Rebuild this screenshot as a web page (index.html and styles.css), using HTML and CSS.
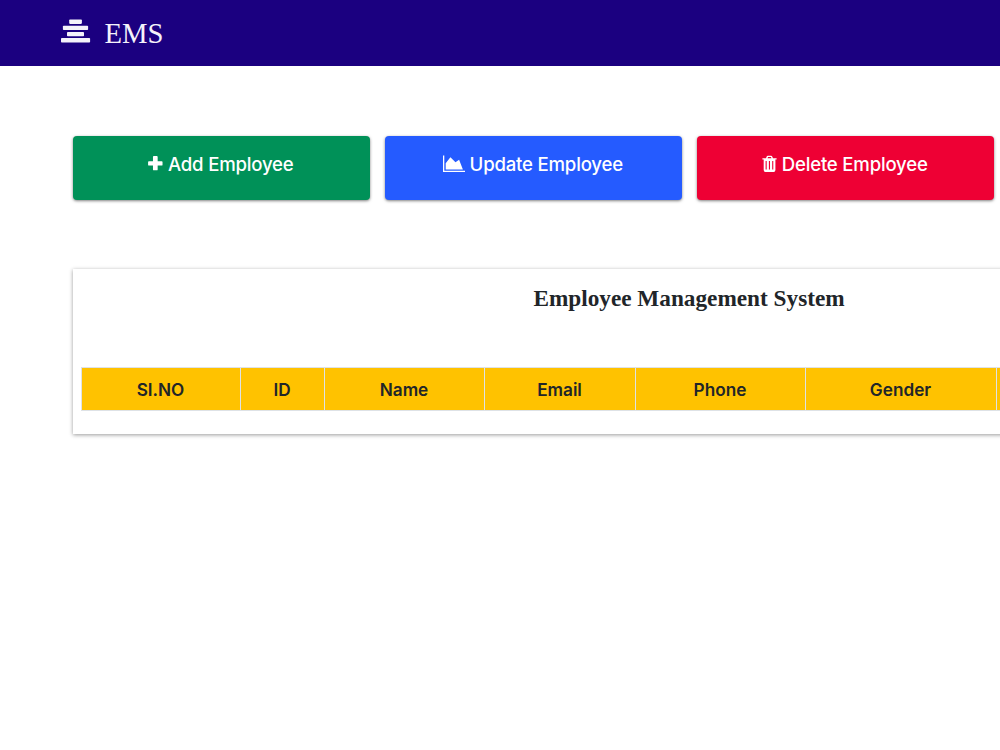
FILE: index.html
```html
<!DOCTYPE html>
<html lang="en">
<head>
  <meta charset="UTF-8">
  <meta name="viewport" content="width=device-width, initial-scale=1.0">
  <title>EMS</title>
  <link rel="stylesheet" href="styles.css">
</head>
<body>
  <nav class="navbar">
    <svg class="logo" viewBox="0 0 30 24" width="30" height="24">
      <rect x="8.2" y="0.4" width="12.7" height="4.5" rx="0.8"/>
      <rect x="1.9" y="6.8" width="25.2" height="4.2" rx="0.8"/>
      <rect x="6" y="13" width="17" height="4.3" rx="0.8"/>
      <rect x="0" y="19" width="29.1" height="4.6" rx="0.8"/>
    </svg>
    <span class="brand">EMS</span>
  </nav>

  <div class="container">
    <div class="actions">
      <button class="btn btn-add">
        <svg class="icon-plus" viewBox="0 0 16 16" width="15" height="15"><path d="M6.200 .1h3.200q.9 0 .9.900V5.600h4.300q.9 0 .9.900v2.700q0 .9-.9.900h-4.300v4.300q0 .9-.9.900H6.200q-.9 0-.9-.9V10.100H1q-.9 0-.9-.9V6.500q0-.9.9-.9h4.300V1q0-.9.900-.9z"/></svg>
        <span>Add Employee</span>
      </button>
      <button class="btn btn-update">
        <svg class="icon-chart" viewBox="0 0 22 18" width="22" height="18"><path d="M0 .5h1.300v15.200H22V17H0zM2.700 14.400V8.200L7.400 2.300l5.100 5 3.600-2.500 3.800 9.600z"/></svg>
        <span>Update Employee</span>
      </button>
      <button class="btn btn-delete">
        <svg class="icon-trash" viewBox="0 0 15 18" width="15" height="18"><path fill-rule="evenodd" d="M4 3.200 4.700 1.400Q5 .7 5.800.7h3.300q.8 0 1.100.7l.8 1.800h3.600v1.400h-1.200v10.500q0 2-1.700 2H3.400q-1.700 0-1.700-2V4.600H.4V3.200zM5.600 3.200h3.800L9 2H6zM3.600 6v8.600h1.100V6zM6.900 6v8.600h1.100V6zM10.200 6v8.600h1.100V6z"/></svg>
        <span>Delete Employee</span>
      </button>
      <button class="btn btn-add"></button>
    </div>

    <div class="card">
      <h1>Employee Management System</h1>
      <table class="employees">
        <colgroup>
          <col class="col-no">
          <col class="col-id">
          <col class="col-name">
          <col class="col-email">
          <col class="col-phone">
          <col class="col-gender">
          <col>
        </colgroup>
        <thead>
          <tr>
            <th>SI.NO</th>
            <th>ID</th>
            <th>Name</th>
            <th>Email</th>
            <th>Phone</th>
            <th>Gender</th>
            <th></th>
          </tr>
        </thead>
      </table>
    </div>
  </div>
</body>
</html>
```
FILE: styles.css
```css
* {
  box-sizing: border-box;
}

body {
  margin: 0;
  height: 750px;
  overflow: hidden;
  background-color: #fff;
  color: #212529;
  font-family: Inter, "Liberation Sans", sans-serif;
}

.navbar {
  display: flex;
  align-items: center;
  height: 66px;
  padding: 0 61px 4px;
  background-color: #1b0080;
  color: #f4f2fa;
}

.logo {
  fill: #f4f2fa;
}

.brand {
  margin-left: 13.5px;
  padding-top: 4px;
  font-family: "Liberation Serif", serif;
  font-size: 28.700px;
  line-height: 32px;
}

.container {
  width: 1233px;
  margin: 70px 0 0 72.5px;
}

.actions {
  display: grid;
  grid-template-columns: repeat(4, 297px);
  gap: 15px;
}

.btn {
  display: flex;
  justify-content: center;
  align-items: center;
  height: 64px;
  padding: 0 0 8px;
  border: none;
  border-radius: 4px;
  box-shadow: 0 1px 3px rgba(0,0,0,0.5);
  color: white;
  font-family: inherit;
  font-size: 18.600px;
  font-weight: 500;
  letter-spacing: -0.2px;
  cursor: pointer;
}

.btn svg {
  margin-right: 4.5px;
  fill: white;
}

.btn .icon-plus {
  margin-top: -1px;
}

.btn-add {
  background-color: #009158;
}

.btn-update {
  background-color: #255bff;
}

.btn-delete {
  background-color: #ee0034;
}

.card {
  height: 165px;
  margin-top: 69px;
  padding: 14px 8px 0;
  background-color: white;
  box-shadow: 0 1px 4px rgba(0,0,0,0.4);
}

h1 {
  margin: 0 0 54px;
  font-family: "Liberation Serif", serif;
  font-size: 23.250px;
  line-height: 30px;
  text-align: center;
}

.employees {
  width: 1217px;
  table-layout: fixed;
  border-collapse: collapse;
}

th {
  height: 43px;
  padding: 1px 0 0;
  border: 1px solid #dee2e6;
  background-color: #ffc200;
  font-size: 17.200px;
  font-weight: 600;
}

.col-no {
  width: 159px;
}

.col-id {
  width: 84px;
}

.col-name {
  width: 160px;
}

.col-email {
  width: 151px;
}

.col-phone {
  width: 170px;
}

.col-gender {
  width: 191px;
}
```
